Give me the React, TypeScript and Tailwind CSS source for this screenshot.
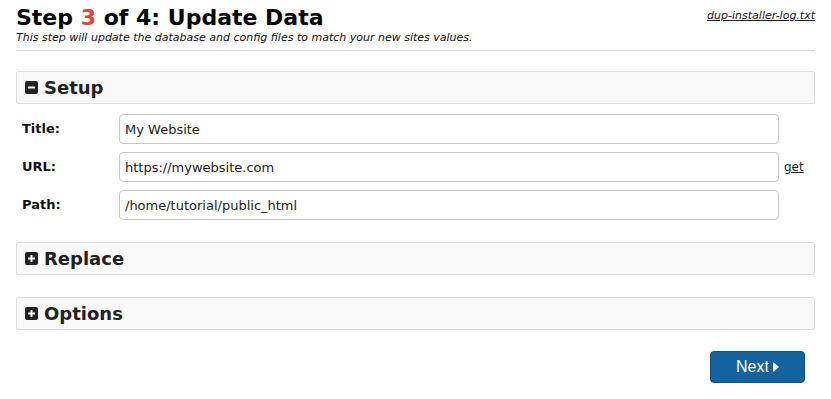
import React from 'react'

const font = { fontFamily: '"DejaVu Sans", Verdana, sans-serif' }

const BoxIcon = ({ open }: { open: boolean }) => (
  <svg width="13" height="13" viewBox="0 0 13 13" className="shrink-0">
    <rect x="0" y="0" width="13" height="13" rx="2" fill="#222" />
    <rect x="3" y="5.5" width="7" height="2" fill="#fff" />
    {!open && <rect x="5.5" y="3" width="2" height="7" fill="#fff" />}
  </svg>
)

const Section = ({ title, open }: { title: string; open: boolean }) => (
  <div className="flex items-center gap-[6px] h-[33px] px-[8px] bg-[#f9f9f9] border border-[#dfdfdf] rounded-[2px]">
    <BoxIcon open={open} />
    <span className="text-[18px] font-bold text-[#222]">{title}</span>
  </div>
)

const Row = ({ label, value, extra }: { label: string; value: string; extra?: boolean }) => (
  <div className="flex items-center">
    <label className="w-[103px] pl-[6px] text-[13px] font-bold text-[#111]">{label}</label>
    <input
      readOnly
      value={value}
      className="w-[660px] h-[30px] px-[5px] text-[13px] text-[#222] border border-[#c8c8c8] rounded-[4px] outline-none"
      style={font}
    />
    {extra && <a className="ml-[5px] text-[12px] underline text-[#222]" href="#">get</a>}
  </div>
)

export default function App() {
  return (
    <div className="w-[831px] h-[399px] bg-white px-[16px] pt-[4px]" style={font}>
      <div className="flex justify-between items-start">
        <div>
          <h1 className="text-[22px] leading-[28px] font-bold text-black">
            Step <span className="text-[#e0473a]">3</span> of 4: Update Data
          </h1>
          <p className="text-[11px] italic text-[#111] leading-[12px]">
            This step will update the database and config files to match your new sites values.
          </p>
        </div>
        <a href="#" className="mt-[4px] text-[11px] italic underline text-[#222]">dup-installer-log.txt</a>
      </div>
      <div className="mt-[6px] border-t border-[#d5d5d5]" />

      <div className="mt-[20px]">
        <Section title="Setup" open />
        <div className="mt-[10px] flex flex-col gap-[8px]">
          <Row label="Title:" value="My Website" />
          <Row label="URL:" value="https://mywebsite.com" extra />
          <Row label="Path:" value="/home/tutorial/public_html" />
        </div>
      </div>

      <div className="mt-[22px]">
        <Section title="Replace" open={false} />
      </div>
      <div className="mt-[22px]">
        <Section title="Options" open={false} />
      </div>

      <div className="mt-[21px] flex justify-end pr-[10px]">
        <button
          className="w-[95px] h-[32px] flex items-center justify-center gap-[4px] bg-[#13649e] text-white text-[16px] rounded-[4px] border border-[#0e4f80]"
          style={{ fontFamily: '"Liberation Sans", Arial, sans-serif' }}
        >
          Next
          <svg width="6" height="10" viewBox="0 0 6 10"><path d="M0 0 L6 5 L0 10 Z" fill="#fff" /></svg>
        </button>
      </div>
    </div>
  )
}
